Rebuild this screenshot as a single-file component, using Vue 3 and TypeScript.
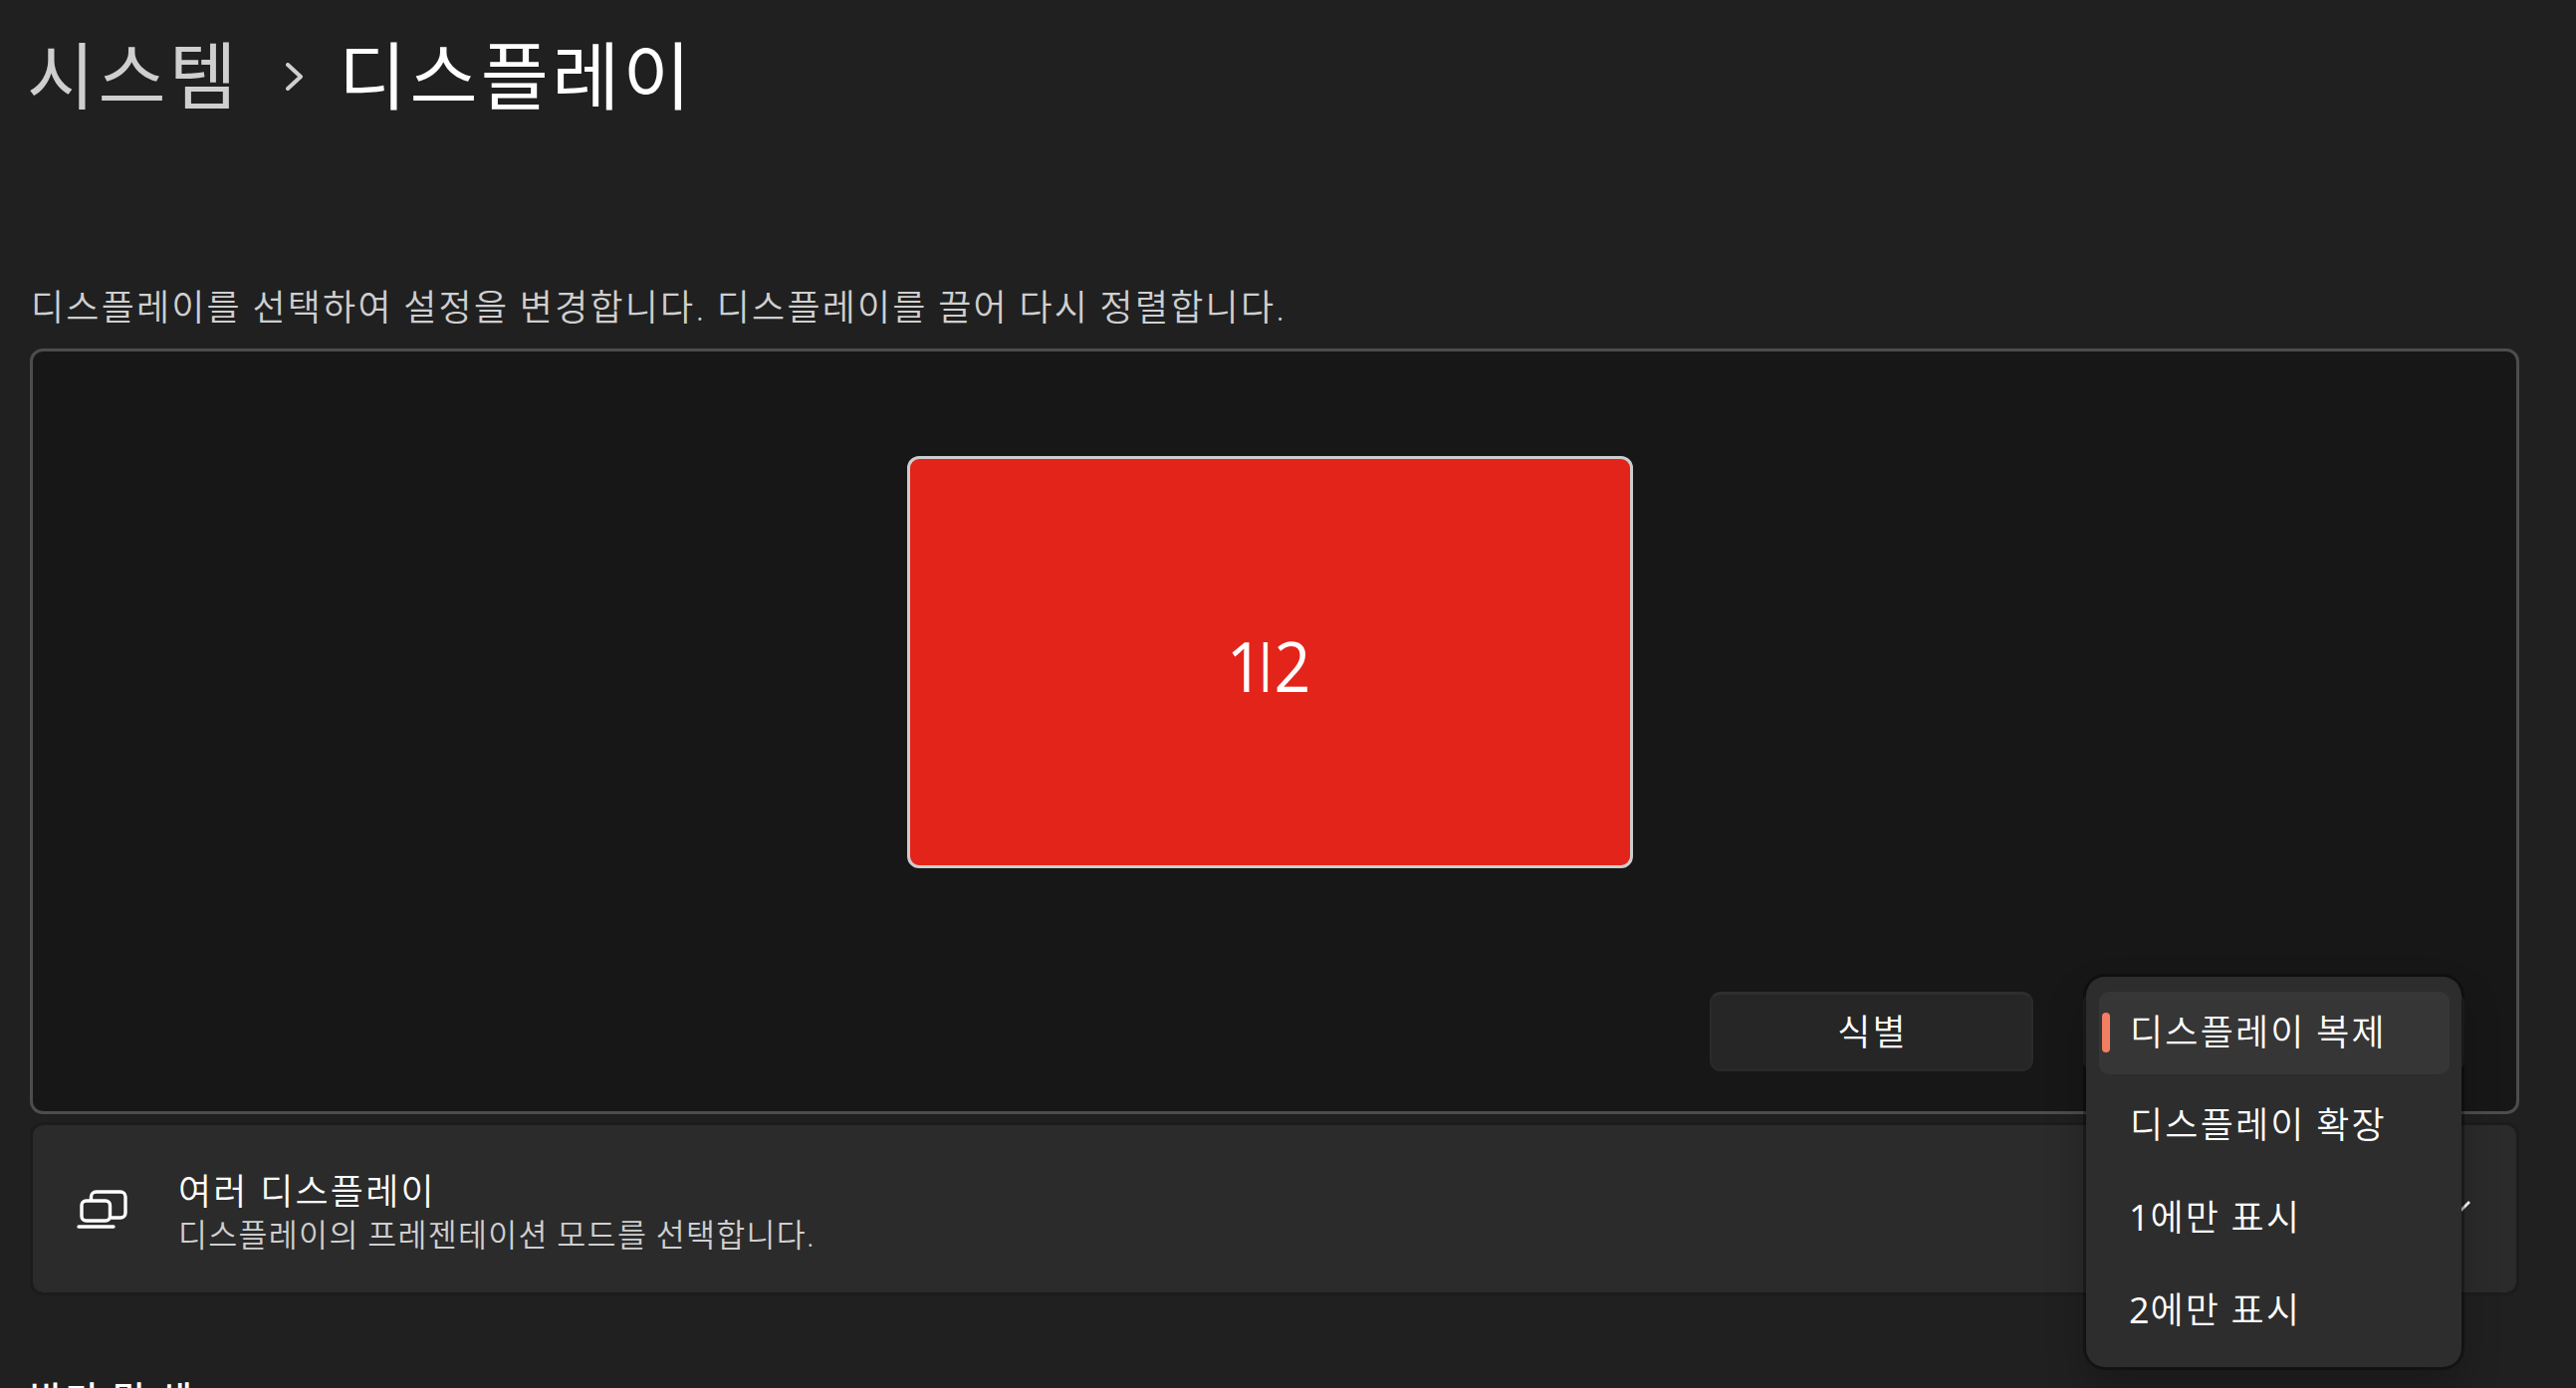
<script setup lang="ts">
import { ref } from 'vue'

interface IMode {
  id: string
  label: string
  screen?: number
}

const modes: IMode[] = [
  { id: 'duplicate', label: '디스플레이 복제' },
  { id: 'extend', label: '디스플레이 확장' },
  { id: 'only1', label: '에만 표시', screen: 1 },
  { id: 'only2', label: '에만 표시', screen: 2 },
]

const selected = ref('duplicate')

function handleSelect(id: string) {
  selected.value = id
}
</script>

<template>
  <main class="page">
    <nav class="breadcrumb">
      <span class="crumb-parent">시스템</span>
      <svg class="crumb-chevron" viewBox="0 0 18 28" fill="none">
        <path d="M2 2L15 14L2 26" />
      </svg>
      <span class="crumb-current">디스플레이</span>
    </nav>

    <p class="hint">디스플레이를 선택하여 설정을 변경합니다. 디스플레이를 끌어 다시 정렬합니다.</p>

    <section class="arrange-panel">
      <div class="monitor">
        <div class="monitor-label">
          <span class="monitor-first">1</span><span class="monitor-divider">|</span><span>2</span>
        </div>
      </div>
      <div class="panel-actions">
        <button class="button">식별</button>
        <div class="select">
          <button class="button select-button"></button>
          <ul class="menu">
            <li
              v-for="mode in modes"
              :key="mode.id"
              :class="['menu-item', mode.id === selected && 'selected']"
              @click="handleSelect(mode.id)"
            >
              <span v-if="mode.screen" class="screen-number">{{ mode.screen }}</span
              >{{ mode.label }}
            </li>
          </ul>
        </div>
      </div>
    </section>

    <section class="card">
      <svg class="card-icon" viewBox="0 0 52 40" fill="none">
        <path d="M14.5 11V8a5 5 0 0 1 5-5H44a5 5 0 0 1 5 5v16a5 5 0 0 1-5 5H35" />
        <rect x="5" y="12" width="28.5" height="20" rx="4.5" />
        <path d="M2 38H37" />
      </svg>
      <div class="card-text">
        <span class="card-title">여러 디스플레이</span>
        <span class="card-caption">디스플레이의 프레젠테이션 모드를 선택합니다.</span>
      </div>
      <svg class="card-chevron" viewBox="0 0 32 18" fill="none">
        <path d="M2 2L16 16L30 2" />
      </svg>
    </section>

    <h2 class="section-title">밝기 및 색</h2>
  </main>
</template>

<style>
body {
  background: #202020;
}
</style>

<style scoped>
.page {
  box-sizing: border-box;
  height: 1394px;
  overflow: hidden;
  padding: 30px 57px 0 30px;
  background: #202020;
  color: #fff;
  font-family: 'Open Sans', 'Noto Sans CJK KR', sans-serif;
  font-size: 36px;
  font-weight: 350;
  letter-spacing: 2.2px;
  word-spacing: -1px;
}

.breadcrumb {
  display: flex;
  align-items: center;
  height: 94px;
  margin-left: -3px;
  font-size: 74px;
  font-weight: 400;
  line-height: 92px;
  letter-spacing: 3.3px;
}

.crumb-parent {
  width: 260px;
  margin-bottom: 2px;
  color: #cfcfcf;
}

.crumb-chevron {
  width: 18px;
  height: 28px;
  margin-right: 35px;
}

.crumb-chevron path {
  stroke: #cfcfcf;
  stroke-width: 4;
  stroke-linecap: round;
  stroke-linejoin: round;
}

.crumb-current {
  margin-bottom: 2px;
}

.hint {
  margin: 157px 0 0 1px;
  height: 69px;
  line-height: 56px;
  color: #cfcfcf;
  white-space: nowrap;
}

.arrange-panel {
  box-sizing: border-box;
  display: flex;
  flex-direction: column;
  align-items: center;
  justify-content: space-between;
  height: 769px;
  padding: 105px 52px 40px 47px;
  border: 3px solid #4d4d4d;
  border-radius: 13px;
  background: #171717;
}

.monitor {
  box-sizing: border-box;
  display: flex;
  align-items: center;
  justify-content: center;
  width: 729px;
  height: 414px;
  margin-right: 4px;
  padding: 6px 3px 0 0;
  border: 3px solid #cdcdcd;
  border-radius: 12px;
  background: #e3241b;
}

.monitor-label {
  display: flex;
  align-items: center;
  font-size: 70px;
  font-weight: 400;
  letter-spacing: 0;
  transform: scaleX(0.92);
}

.monitor-first {
  margin-right: -5px;
}

.monitor-divider {
  display: flex;
  justify-content: center;
  width: 15px;
  margin: 0 2px 9px 0;
  font-size: 50px;
  font-weight: 600;
}

.panel-actions {
  display: flex;
  align-self: flex-end;
  gap: 50px;
}

.button {
  box-sizing: border-box;
  width: 325px;
  height: 80px;
  padding: 0 0 0 2px;
  border: 2px solid #2a2a2a;
  border-top: 3px solid #2e2e2e;
  border-radius: 11px;
  background: #262626;
  color: #fff;
  font: inherit;
  letter-spacing: inherit;
  line-height: 74px;
}

.select {
  position: relative;
}

.select-button {
  display: block;
  width: 383px;
}

/* The open list covers its own button */
.menu {
  position: absolute;
  top: -15px;
  left: 3px;
  box-sizing: border-box;
  display: flex;
  flex-direction: column;
  gap: 10px;
  width: 377px;
  height: 392px;
  margin: 0;
  padding: 15px 12px 0 13px;
  border-radius: 19px;
  background: #2d2d2d;
  box-shadow:
    0 0 0 3px rgb(0 0 0 / 0.3),
    0 20px 40px rgb(0 0 0 / 0.24);
  list-style: none;
}

.menu-item {
  position: relative;
  height: 83px;
  padding-left: 31px;
  border-radius: 10px;
  line-height: 82px;
  white-space: nowrap;
}

.screen-number {
  margin-left: -1px;
  font-weight: 400;
  letter-spacing: 0.8px;
}

.selected {
  background: #363636;
}

.selected::before {
  content: '';
  position: absolute;
  top: 21px;
  left: 3px;
  width: 8px;
  height: 40px;
  border-radius: 4px;
  background: #f37f62;
}

.card {
  box-sizing: border-box;
  display: flex;
  align-items: center;
  width: 2500px;
  height: 174px;
  margin-top: 8px;
  padding: 0 45px 0 44px;
  border: 3px solid #1c1c1c;
  border-radius: 13px;
  background: #2b2b2b;
  background-clip: padding-box;
}

.card-icon {
  width: 52px;
  height: 40px;
}

.card-icon path,
.card-icon rect {
  stroke: #fff;
  stroke-width: 3.4;
  stroke-linecap: round;
}

.card-text {
  display: flex;
  flex: 1;
  flex-direction: column;
  margin-left: 50px;
  padding-top: 7px;
  line-height: 43px;
}

.card-title {
  word-spacing: 0;
}

.card-caption {
  color: #cfcfcf;
  font-size: 31.5px;
  letter-spacing: 1.3px;
}

.card-chevron {
  width: 32px;
  height: 18px;
}

.card-chevron path {
  stroke: #fff;
  stroke-width: 2.8;
}

.section-title {
  margin: 77px 0 0;
  font-size: 36px;
  font-weight: 500;
  line-height: 56px;
  word-spacing: 0.5px;
}
</style>
